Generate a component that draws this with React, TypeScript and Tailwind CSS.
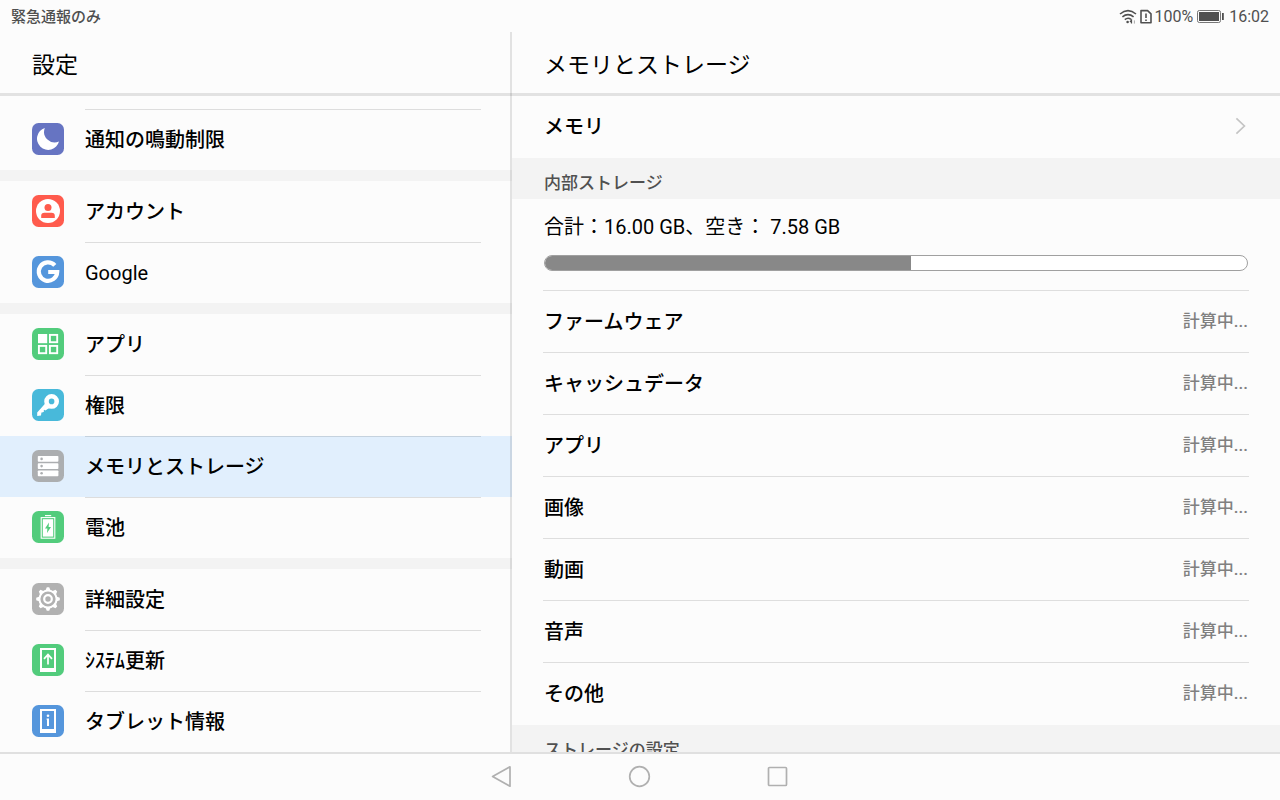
import React from 'react';

type MenuItem = {
    label: string;
    color: string;
    icon: React.ReactNode;
    selected?: boolean;
    latin?: boolean;
};

const MoonIcon = (
    <path d="M12.8 5 A11.2 11.2 0 1 0 27 18.6 A10.7 10.7 0 0 1 12.8 5 Z" fill="#fff" />
);

const AccountIcon = (
    <>
        <circle cx="16" cy="16" r="12" fill="#fff" />
        <circle cx="16" cy="12.6" r="3.5" fill="#ff5b4d" />
        <path d="M9.2 23 V20.8 Q9.2 17.8 12.4 17.8 H19.6 Q22.8 17.8 22.8 20.8 V23 Z" fill="#ff5b4d" />
    </>
);

const GoogleIcon = (
    <path d="M22.8 9.4 A9.2 9.2 0 1 0 25.2 16 H16.2" fill="none" stroke="#fff" strokeWidth="4.2" />
);

const AppsIcon = (
    <>
        <rect x="6" y="6" width="9.2" height="9.2" fill="#fff" />
        <g fill="none" stroke="#fff" strokeWidth="1.9">
            <rect x="17.9" y="6.9" width="7.3" height="7.3" />
            <rect x="6.9" y="17.9" width="7.3" height="7.3" />
            <rect x="17.9" y="17.9" width="7.3" height="7.3" />
        </g>
    </>
);

const KeyIcon = (
    <>
        <circle cx="19.6" cy="12.4" r="5.1" fill="none" stroke="#fff" strokeWidth="4.6" />
        <path d="M13 14.8 L17.2 19 L13.4 21.6 L12.6 20.8 L11.4 22 L12.2 22.8 L10 23.6 L9.4 23.4 L9 26.6 L5.2 27 V23.4 Z" fill="#fff" />
    </>
);

const StorageIcon = (
    <>
        {[6, 13.2, 20.4].map((y) => (
            <g key={y}>
                <rect x="5.8" y={y} width="20.6" height="5.8" rx="0.8" fill="#fff" />
                <circle cx="9.6" cy={y + 2.9} r="1.3" fill="#acaeb0" />
            </g>
        ))}
    </>
);

const BatteryIcon = (
    <>
        <rect x="13" y="4" width="6.2" height="1.2" fill="#fff" />
        <rect x="9.2" y="6.6" width="13.6" height="20.6" fill="none" stroke="#fff" strokeWidth="1.1" />
        <rect x="10.8" y="8.2" width="10.4" height="17.4" fill="#fff" />
        <path d="M17 11.6 L13 17.6 H15.4 L15 22 L19 16 H16.6 Z" fill="#52cc7c" />
    </>
);

const GearIcon = (
    <>
        <circle cx="16" cy="16" r="8.6" fill="none" stroke="#fff" strokeWidth="2" />
        <circle cx="16" cy="16" r="3.8" fill="none" stroke="#fff" strokeWidth="2.2" />
        {[0, 45, 90, 135, 180, 225, 270, 315].map((angle) => (
            <path key={angle} d="M13.4 7.6 L14.8 4.2 H17.2 L18.6 7.6 Z" fill="#fff" transform={`rotate(${angle} 16 16)`} />
        ))}
    </>
);

const UpdateIcon = (
    <>
        <path d="M8 4 H24 V28 H8 Z M10 6 V24 H22 V6 Z" fill="#fff" fillRule="evenodd" />
        <path d="M16 20.4 V10.6 M12 14.8 L16 10.6 L20 14.8" fill="none" stroke="#fff" strokeWidth="1.7" />
    </>
);

const InfoIcon = (
    <>
        <path d="M8 4 H24 V28 H8 Z M10 6 V24 H22 V6 Z" fill="#fff" fillRule="evenodd" />
        <circle cx="16" cy="10.7" r="1.3" fill="#fff" />
        <path d="M14.6 13.6 H17 V21 H15 V14.8 H14.6 Z" fill="#fff" />
    </>
);

const groups: MenuItem[][] = [
    [{ label: '通知の鳴動制限', color: '#6674c2', icon: MoonIcon }],
    [
        { label: 'アカウント', color: '#ff5b4d', icon: AccountIcon },
        { label: 'Google', color: '#5596dc', icon: GoogleIcon, latin: true },
    ],
    [
        { label: 'アプリ', color: '#52cc7c', icon: AppsIcon },
        { label: '権限', color: '#48b9da', icon: KeyIcon },
        { label: 'メモリとストレージ', color: '#acaeb0', icon: StorageIcon, selected: true },
        { label: '電池', color: '#52cc7c', icon: BatteryIcon },
    ],
    [
        { label: '詳細設定', color: '#b1b1b1', icon: GearIcon },
        { label: 'ｼｽﾃﾑ更新', color: '#52cc7c', icon: UpdateIcon },
        { label: 'タブレット情報', color: '#5596dc', icon: InfoIcon },
    ],
];

const usage = ['ファームウェア', 'キャッシュデータ', 'アプリ', '画像', '動画', '音声', 'その他'];

const total = 16;
const free = 7.58;
const usedPercent = ((total - free) / total) * 100 - 0.5;

const StatusBar = () => (
    <div className="flex h-8 shrink-0 items-center justify-between px-[11px] pt-px text-[#505050]">
        <span className="text-[15px] leading-5 font-medium">緊急通報のみ</span>
        <div className="flex items-center text-base leading-5">
            <svg width="18" height="16" viewBox="0 0 18 16" fill="none" stroke="#505050" strokeWidth="1.6">
                <path d="M1 5 Q9 -1.6 17 5" />
                <path d="M3.4 7.8 Q9 3.4 14.6 7.8" />
                <path d="M5.8 10.6 Q9 8 12 10.4" />
                <circle cx="8.6" cy="13" r="1.3" fill="#505050" stroke="none" />
                <path d="M11 13 L12.5 11.2 V14.4" strokeWidth="1.2" />
                <path d="M15.4 11.4 V14.6" stroke="#aaa" strokeWidth="1" />
            </svg>
            <svg className="ml-[3px] mr-0.5" width="12" height="16" viewBox="0 0 12 16" fill="none" stroke="#505050" strokeWidth="1.6">
                <path d="M1 1.6 H7.6 L11 4.8 V13.8 H1 Z" strokeLinejoin="round" />
                <path d="M6 4.4 V9 M6 10.4 V12" />
            </svg>
            <span>100%</span>
            <svg className="ml-1 mr-[5px]" width="27" height="14" viewBox="0 0 27 14">
                <rect x="0.5" y="0.5" width="23" height="12" rx="1.8" fill="none" stroke="#777" />
                <rect x="2" y="2" width="20" height="9" fill="#505050" />
                <rect x="25" y="3" width="1.8" height="7" fill="#505050" />
            </svg>
            <span>16:02</span>
        </div>
    </div>
);

const MenuRow: React.FC<{ item: MenuItem; divider: boolean }> = ({ item, divider }) => (
    <a
        href="#"
        aria-current={item.selected ? 'page' : undefined}
        className={`grid h-[61px] grid-cols-[85px_1fr] ${item.selected ? 'bg-[#e1effd]' : ''}`}
    >
        <span className="flex items-center pb-px pl-8">
            <svg width="32" height="32" viewBox="0 0 32 32">
                <rect width="32" height="32" rx="6.5" fill={item.color} />
                {item.icon}
            </svg>
        </span>
        <span
            className={`mr-[31px] flex items-center border-t text-xl leading-7 ${item.latin ? 'font-normal' : 'font-medium'} ${divider ? 'border-black/12' : 'border-transparent'}`}
        >
            {item.label}
        </span>
    </a>
);

const PaneTitle: React.FC<{ children: React.ReactNode }> = ({ children }) => (
    <h1 className="flex h-16 shrink-0 items-center border-b-3 border-[#e2e2e2] px-8 pt-1.5 text-[23px] leading-8">{children}</h1>
);

const SectionTitle: React.FC<{ children: React.ReactNode }> = ({ children }) => (
    <h2 className="h-[41px] bg-[#f3f3f3] px-8 pt-[13px] text-[17px] leading-6 font-medium text-[#505050]">{children}</h2>
);

export default function App() {
    return (
        <div className="flex h-screen flex-col overflow-hidden bg-[#fcfcfc] font-['Roboto','Noto_Sans_CJK_JP',sans-serif] text-black" lang="ja">
            <StatusBar />

            <div className="flex min-h-0 flex-1">
                {/* Settings menu */}
                <aside className="relative flex w-2/5 flex-col">
                    <PaneTitle>設定</PaneTitle>
                    <nav className="min-h-0 flex-1 overflow-hidden pt-[13px]">
                        {groups.map((group, g) => (
                            <div key={g} className={g > 0 ? 'border-t-11 border-[#f3f3f3]' : ''}>
                                {group.map((item, i) => (
                                    <MenuRow key={item.label} item={item} divider={g === 0 || i > 0} />
                                ))}
                            </div>
                        ))}
                    </nav>
                    {/* pane divider, tints the rows below it */}
                    <div className="absolute inset-y-0 right-0 w-0.5 bg-black/10" />
                </aside>

                {/* Storage details */}
                <main className="flex w-3/5 flex-col">
                    <PaneTitle>メモリとストレージ</PaneTitle>
                    <div className="min-h-0 flex-1 overflow-hidden">
                        <a href="#" className="flex h-[62px] items-center justify-between px-8 text-xl leading-7 font-medium">
                            メモリ
                            <svg width="14" height="20" viewBox="0 0 14 20" fill="none" stroke="#c4c4c4" strokeWidth="1.7">
                                <path d="M2.4 1.4 L10.4 9 L2.4 16.6" />
                            </svg>
                        </a>

                        <SectionTitle>内部ストレージ</SectionTitle>
                        <div className="px-8 pt-3.5 pb-[19px]">
                            <p className="text-xl leading-7">合計：16.00 GB、空き： 7.58 GB</p>
                            <div
                                role="progressbar"
                                aria-valuenow={Math.round(usedPercent)}
                                aria-label="内部ストレージ"
                                className="mt-3.5 h-4 overflow-hidden rounded-full border border-[#a0a0a0] bg-white"
                            >
                                <div className="h-full bg-[#888888]" style={{ width: `${usedPercent}%` }} />
                            </div>
                        </div>

                        <dl className="mx-[31px] mb-px">
                            {usage.map((name) => (
                                <div key={name} className="flex h-[62px] items-center justify-between border-t border-[#dedede] px-px">
                                    <dt className="text-xl leading-7 font-medium">{name}</dt>
                                    <dd className="pb-0.5 text-[17px] leading-6 font-medium text-[#808080]">計算中...</dd>
                                </div>
                            ))}
                        </dl>

                        <SectionTitle>ストレージの設定</SectionTitle>
                    </div>
                </main>
            </div>

            {/* System navigation */}
            <div className="flex h-12 shrink-0 justify-center border-t-2 border-[#e0e0e0]">
                <button aria-label="戻る" className="flex w-[138px] items-center justify-center">
                    <svg width="24" height="24" viewBox="0 0 24 24" fill="none" stroke="#b0b0b0" strokeWidth="1.7" strokeLinejoin="round">
                        <path d="M20 1.8 V21.2 L2.6 11.5 Z" />
                    </svg>
                </button>
                <button aria-label="ホーム" className="flex w-[138px] items-center justify-center">
                    <svg width="24" height="24" viewBox="0 0 24 24" fill="none" stroke="#b0b0b0" strokeWidth="1.7">
                        <circle cx="11.5" cy="11.5" r="9.8" />
                    </svg>
                </button>
                <button aria-label="履歴" className="flex w-[138px] items-center justify-center">
                    <svg width="24" height="24" viewBox="0 0 24 24" fill="none" stroke="#b0b0b0" strokeWidth="1.7">
                        <rect x="2.5" y="2.5" width="18" height="18" rx="1" />
                    </svg>
                </button>
            </div>
        </div>
    );
}
